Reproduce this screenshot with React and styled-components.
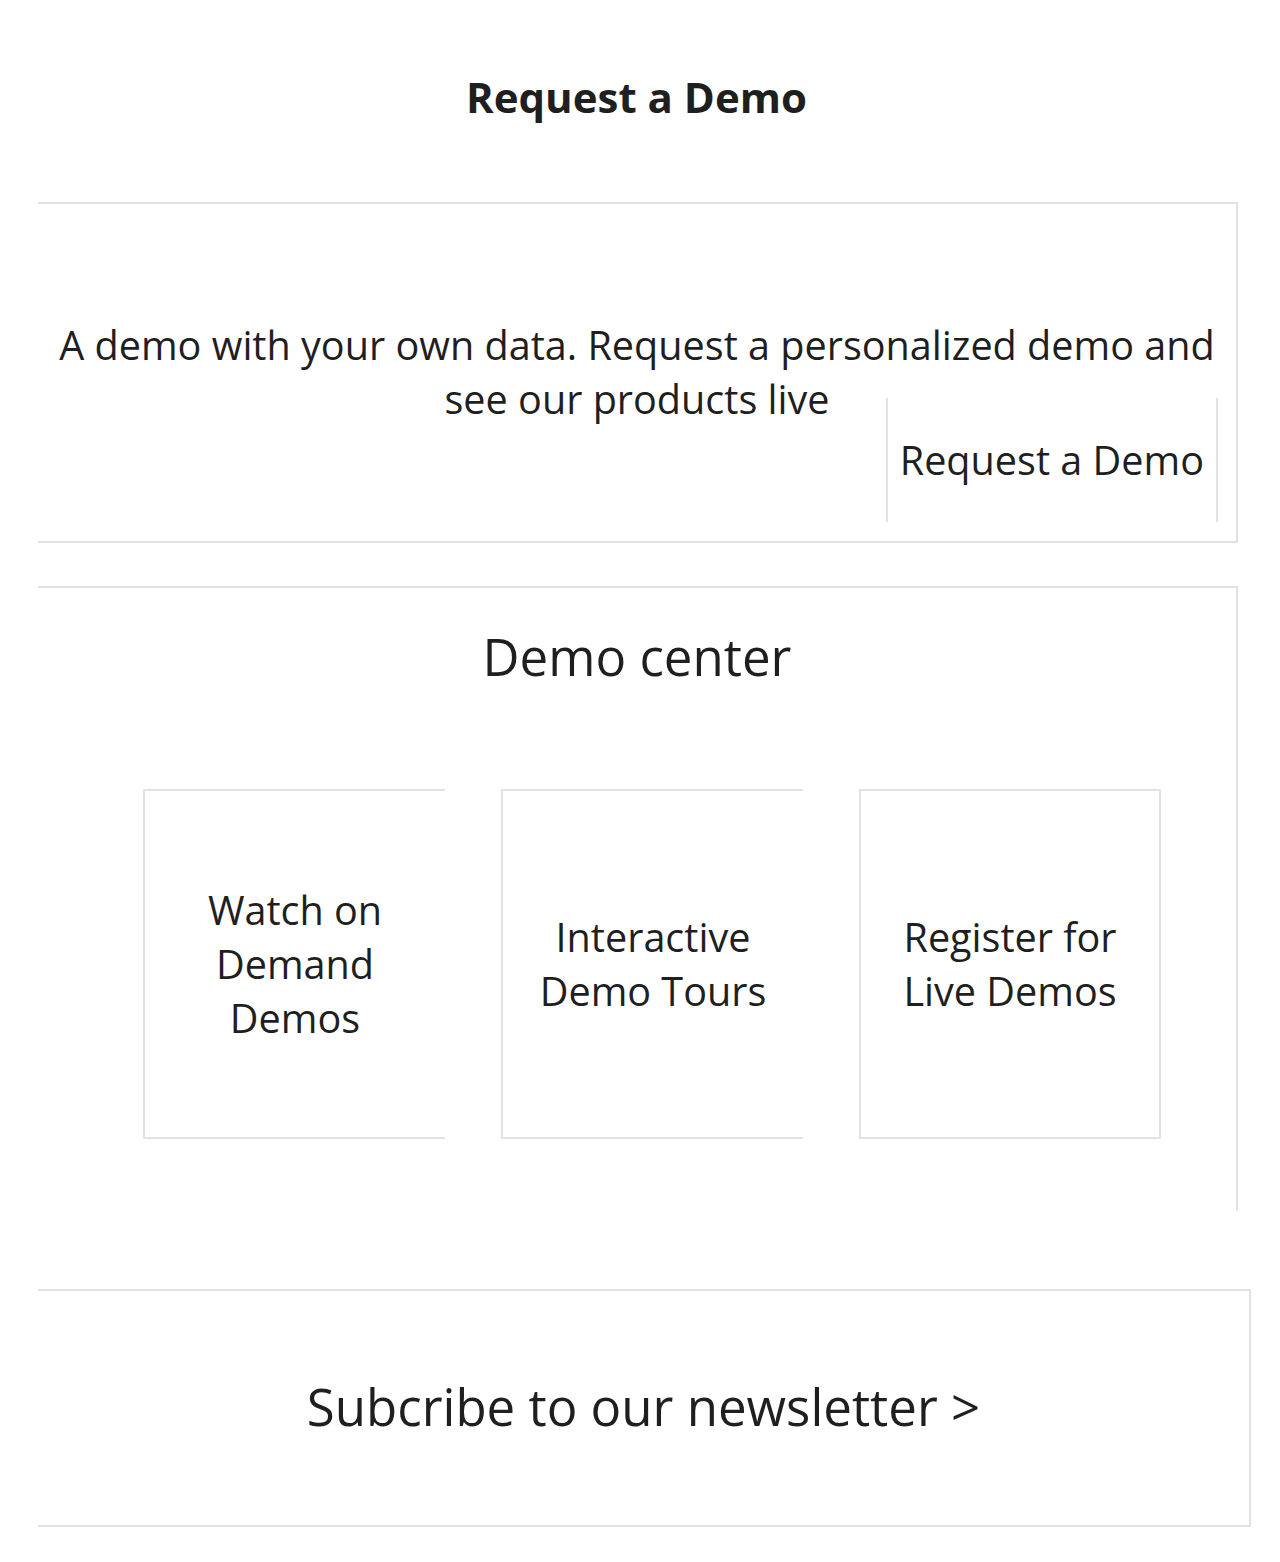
import React from "react"
import styled, { createGlobalStyle } from "styled-components"

const line = "#e2e2e2"
const ink = "#1f1f1f"

const GlobalStyle = createGlobalStyle`
  html, body {
    margin: 0;
    padding: 0;
    background: #fff;
  }
  body {
    font-family: "Open Sans", "Liberation Sans", sans-serif;
    color: ${ink};
  }
  * {
    box-sizing: border-box;
  }
`

const Page = styled.main`
  width: 1280px;
  padding: 68px 0 34px;
`

const Heading = styled.h1`
  margin: 0 0 76px;
  padding-right: 7px;
  font-size: 42px;
  line-height: 58px;
  font-weight: 700;
  text-align: center;
`

const RequestCard = styled.section`
  margin-left: 38px;
  width: 1200px;
  border: 2px solid ${line};
  border-left: none;
  padding: 114px 18px 19px;
  display: flex;
  flex-direction: column;
  align-items: center;
`

const Lead = styled.p`
  margin: 0;
  font-size: 39.6px;
  line-height: 54px;
  text-align: center;
`

const DemoButton = styled.a`
  align-self: flex-end;
  margin-top: -28px;
  padding: 35px 12px;
  border-left: 2px solid ${line};
  border-right: 2px solid ${line};
  font-size: 39.6px;
  line-height: 54px;
  color: ${ink};
  text-decoration: none;
`

const CenterBox = styled.section`
  margin: 43px 0 0 38px;
  width: 1200px;
  border-top: 2px solid ${line};
  border-right: 2px solid ${line};
  padding: 33px 0 72px;
`

const CenterTitle = styled.h2`
  margin: 0 0 98px;
  font-size: 51px;
  line-height: 70px;
  font-weight: 400;
  text-align: center;
`

const CardRow = styled.div`
  display: flex;
  gap: 56px;
  padding-left: 105px;
`

const DemoCard = styled.a`
  width: 302px;
  height: 350px;
  padding: 0 30px;
  display: flex;
  align-items: center;
  justify-content: center;
  text-align: center;
  font-size: 39.6px;
  line-height: 54px;
  color: ${ink};
  text-decoration: none;
  border: 2px solid ${line};
  border-right: ${(p) => (p.$closed ? `2px solid ${line}` : "none")};
`

const Newsletter = styled.a`
  margin: 78px 0 0 38px;
  width: 1213px;
  height: 238px;
  padding-bottom: 4px;
  display: flex;
  align-items: center;
  justify-content: center;
  border: 2px solid ${line};
  border-left: none;
  font-size: 51px;
  line-height: 70px;
  color: ${ink};
  text-decoration: none;
`

const demos = [
  { label: "Watch on Demand Demos" },
  { label: "Interactive Demo Tours" },
  { label: "Register for Live Demos", closed: true },
]

export default function App() {
  return (
    <>
      <GlobalStyle />
      <Page>
        <Heading>Request a Demo</Heading>
        <RequestCard>
          <Lead>
            A demo with your own data. Request a personalized demo and see our
            products live
          </Lead>
          <DemoButton href="#">Request a Demo</DemoButton>
        </RequestCard>
        <CenterBox>
          <CenterTitle>Demo center</CenterTitle>
          <CardRow>
            {demos.map((d) => (
              <DemoCard key={d.label} href="#" $closed={d.closed}>
                {d.label}
              </DemoCard>
            ))}
          </CardRow>
        </CenterBox>
        <Newsletter href="#">Subcribe to our newsletter &gt;</Newsletter>
      </Page>
    </>
  )
}
